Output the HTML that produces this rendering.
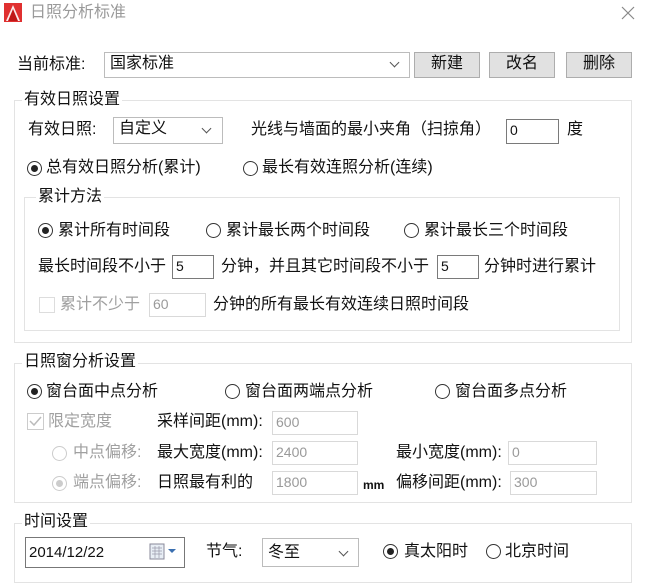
<!DOCTYPE html>
<html><head><meta charset="utf-8"><style>
*{box-sizing:border-box;margin:0;padding:0}
body{width:650px;height:570px;background:#fff;position:relative;overflow:hidden;font-family:"Liberation Sans","Noto Sans CJK SC",sans-serif;font-size:16px;color:#111}
.a{position:absolute;white-space:nowrap;line-height:20px}
.g{position:absolute;border:1px solid #e3e3e3}
.lbl{position:absolute;background:#fff;padding:0 2px;line-height:20px;white-space:nowrap}
.box{position:absolute;border:1px solid #7a7a7a;background:#fff;font-size:14px;line-height:20px;padding-left:3px}
.dis{border-color:#d9d9d9;color:#9a9a9a}
.cb{position:absolute;border:1px solid #bcbcbc;background:#fff;font-size:16px;line-height:22px;padding-left:5px}
.btn{position:absolute;border:1px solid #adadad;background:#e1e1e1;text-align:center;line-height:22px}
.r{position:absolute;width:15px;height:15px;border:1px solid #333;border-radius:50%;background:#fff}
.r.on::after{content:"";position:absolute;left:3px;top:3px;width:7px;height:7px;border-radius:50%;background:#222}
.r.d{border-color:#ccc}.r.d.on::after{background:#ccc}
.gray{color:#a0a0a0}
.chev{position:absolute;width:7px;height:7px;border-right:1.3px solid #555;border-bottom:1.3px solid #555;transform:rotate(45deg)}
</style></head><body>
<svg class="a" style="left:4px;top:3px" width="18" height="19" viewBox="0 0 18 19"><rect width="18" height="19" fill="#e03030"/><path d="M2 18 L9 2 L16 18 L12 18 L9 10 L6 18Z" fill="#fff" opacity=".9"/><path d="M4 18 L9 6 L14 18" fill="#c01818"/></svg>
<div class="a" style="left:30px;top:3px;color:#9a9a9a">日照分析标准</div>
<svg class="a" style="left:621px;top:6px" width="14" height="14"><path d="M1 1L13 13M13 1L1 13" stroke="#888" stroke-width="1.2"/></svg>

<div class="a" style="left:17px;top:55px">当前标准:</div>
<div class="cb" style="left:104px;top:52px;width:306px;height:26px">国家标准</div>
<div class="chev" style="left:391px;top:59px"></div>
<div class="btn" style="left:414px;top:52px;width:66px;height:26px">新建</div>
<div class="btn" style="left:489px;top:52px;width:66px;height:26px">改名</div>
<div class="btn" style="left:566px;top:52px;width:66px;height:26px">删除</div>

<div class="g" style="left:14px;top:100px;width:618px;height:243px"></div>
<div class="lbl" style="left:22px;top:90px">有效日照设置</div>
<div class="a" style="left:28px;top:120px">有效日照:</div>
<div class="cb" style="left:113px;top:117px;width:110px;height:27px">自定义</div>
<div class="chev" style="left:203px;top:125px"></div>
<div class="a" style="left:251px;top:120px">光线与墙面的最小夹角（扫掠角）</div>
<div class="box" style="left:506px;top:119px;width:53px;height:25px">0</div>
<div class="a" style="left:567px;top:120px">度</div>
<div class="r on" style="left:27px;top:161px"></div><div class="a" style="left:46px;top:158px">总有效日照分析(累计)</div>
<div class="r" style="left:243px;top:161px"></div><div class="a" style="left:262px;top:158px">最长有效连照分析(连续)</div>

<div class="g" style="left:24px;top:197px;width:596px;height:134px"></div>
<div class="lbl" style="left:36px;top:187px">累计方法</div>
<div class="r on" style="left:38px;top:223px"></div><div class="a" style="left:58px;top:221px">累计所有时间段</div>
<div class="r" style="left:206px;top:223px"></div><div class="a" style="left:226px;top:221px">累计最长两个时间段</div>
<div class="r" style="left:404px;top:223px"></div><div class="a" style="left:424px;top:221px">累计最长三个时间段</div>
<div class="a" style="left:38px;top:257px">最长时间段不小于</div>
<div class="box" style="left:172px;top:255px;width:42px;height:24px">5</div>
<div class="a" style="left:221px;top:257px">分钟，并且其它时间段不小于</div>
<div class="box" style="left:437px;top:255px;width:42px;height:24px">5</div>
<div class="a" style="left:484px;top:257px">分钟时进行累计</div>
<div style="position:absolute;left:39px;top:297px;width:16px;height:16px;border:1px solid #ddd"></div>
<div class="a gray" style="left:60px;top:295px">累计不少于</div>
<div class="box dis" style="left:149px;top:293px;width:57px;height:24px">60</div>
<div class="a" style="left:213px;top:295px">分钟的所有最长有效连续日照时间段</div>

<div class="g" style="left:14px;top:363px;width:618px;height:140px"></div>
<div class="lbl" style="left:22px;top:352px">日照窗分析设置</div>
<div class="r on" style="left:27px;top:384px"></div><div class="a" style="left:46px;top:382px">窗台面中点分析</div>
<div class="r" style="left:225px;top:384px"></div><div class="a" style="left:245px;top:382px">窗台面两端点分析</div>
<div class="r" style="left:435px;top:384px"></div><div class="a" style="left:455px;top:382px">窗台面多点分析</div>
<svg class="a" style="left:27px;top:413px" width="17" height="17"><rect x=".5" y=".5" width="16" height="16" fill="#fff" stroke="#ccc"/><path d="M3 8 L7 12 L14 4" fill="none" stroke="#bbb" stroke-width="1.5"/></svg>
<div class="a gray" style="left:48px;top:412px">限定宽度</div>
<div class="a" style="left:157px;top:412px">采样间距(mm):</div>
<div class="box dis" style="left:272px;top:411px;width:86px;height:24px">600</div>
<div class="r d" style="left:52px;top:446px"></div><div class="a gray" style="left:73px;top:443px">中点偏移:</div>
<div class="a" style="left:157px;top:443px">最大宽度(mm):</div>
<div class="box dis" style="left:272px;top:441px;width:86px;height:24px">2400</div>
<div class="a" style="left:396px;top:443px">最小宽度(mm):</div>
<div class="box dis" style="left:508px;top:441px;width:89px;height:24px">0</div>
<div class="r d on" style="left:52px;top:476px"></div><div class="a gray" style="left:73px;top:473px">端点偏移:</div>
<div class="a" style="left:157px;top:473px">日照最有利的</div>
<div class="box dis" style="left:272px;top:471px;width:86px;height:24px">1800</div>
<div class="a" style="left:363px;top:475px;font-size:12px;font-weight:bold">mm</div>
<div class="a" style="left:396px;top:473px">偏移间距(mm):</div>
<div class="box dis" style="left:510px;top:471px;width:87px;height:24px">300</div>

<div class="g" style="left:14px;top:523px;width:618px;height:60px"></div>
<div class="lbl" style="left:22px;top:512px">时间设置</div>
<div class="box" style="left:25px;top:537px;width:160px;height:31px;border-color:#777;line-height:29px;font-size:15px">2014/12/22</div>
<svg class="a" style="left:149px;top:543px" width="32" height="18"><rect x="1" y="1" width="14" height="15" fill="#e8eef5" stroke="#889"/><path d="M3 5H13M3 8H13M3 11H13M6 3V15M10 3V15" stroke="#99a" stroke-width=".7"/><path d="M19 6H27L23 10Z" fill="#3a6fb0"/></svg>
<div class="a" style="left:206px;top:542px">节气:</div>
<div class="cb" style="left:262px;top:538px;width:97px;height:29px;line-height:27px">冬至</div>
<div class="chev" style="left:340px;top:548px"></div>
<div class="r on" style="left:383px;top:544px"></div><div class="a" style="left:404px;top:542px">真太阳时</div>
<div class="r" style="left:486px;top:544px"></div><div class="a" style="left:505px;top:542px">北京时间</div>
</body></html>
